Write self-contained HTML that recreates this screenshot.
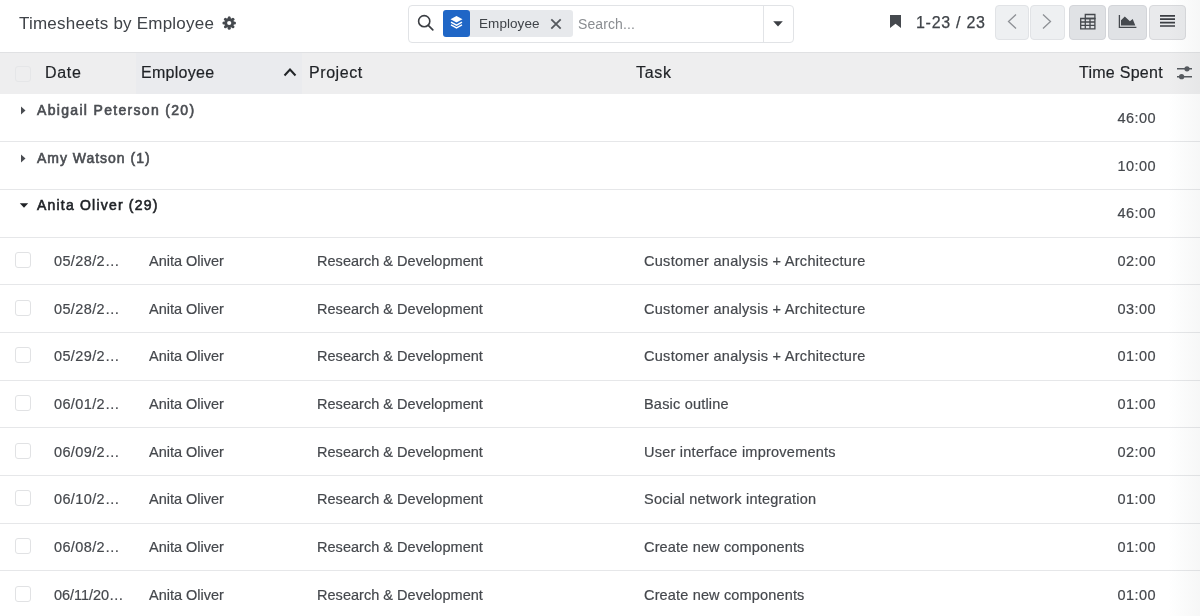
<!DOCTYPE html>
<html><head><meta charset="utf-8">
<style>
*{box-sizing:border-box;margin:0;padding:0}
html,body{width:1200px;height:616px;overflow:hidden;background:#fff;font-family:"Liberation Sans",sans-serif;color:#3d4147}
body{will-change:transform;position:relative}
.a{position:absolute;white-space:nowrap}
.title{left:19px;top:10px;font-size:17px;line-height:28px;letter-spacing:0.22px;color:#3f4348}
.search{left:408px;top:5px;width:386px;height:38px;border:1px solid #e1e3e6;border-radius:4px;background:#fff}
.badge{left:443px;top:10px;width:27px;height:27px;background:#1f66c6;border-radius:3px}
.facet{left:469px;top:10px;width:104px;height:27px;background:#e7e9ec;border-radius:0 3px 3px 0}
.btn{top:5px;height:35px;border:1px solid #e1e3e6;border-radius:4px;background:#eef0f2}
.hdr{left:0;top:52px;width:1200px;height:42px;background:#eeeeef;border-top:1px solid #e0e1e3}
.hsort{left:136px;top:53px;width:166px;height:41px;background:#eaebee}
.th{top:63px;font-size:16px;line-height:20px;color:#1f2226;-webkit-text-stroke:0.2px currentColor}
.cb{width:16px;height:16px;border:1px solid #e1e2e4;border-radius:3px;background:#fff}
.line{left:0;width:1200px;height:1px;background:#e6e7e9}
.grp{font-size:14px;line-height:20px;font-weight:400;-webkit-text-stroke:0.6px currentColor}
.td{font-size:14.5px;line-height:20px;color:#45484d;-webkit-text-stroke:0.2px currentColor}
.num{font-size:14.5px;line-height:20px;color:#45484d;letter-spacing:0.45px;text-align:right;-webkit-text-stroke:0.2px currentColor}
</style></head><body>

<div class="a title">Timesheets by Employee</div>
<svg class="a" style="left:222px;top:16px" width="15" height="14" viewBox="0 0 15 14"><g fill="#45494e"><circle cx="7.2" cy="7" r="4.9"/><circle cx="7.20" cy="12.30" r="1.5"/><circle cx="3.45" cy="10.75" r="1.5"/><circle cx="1.90" cy="7.00" r="1.5"/><circle cx="3.45" cy="3.25" r="1.5"/><circle cx="7.20" cy="1.70" r="1.5"/><circle cx="10.95" cy="3.25" r="1.5"/><circle cx="12.50" cy="7.00" r="1.5"/><circle cx="10.95" cy="10.75" r="1.5"/></g><circle cx="7.2" cy="7" r="2.1" fill="#fff"/></svg>

<div class="a search"></div>
<svg class="a" style="left:417px;top:14px" width="17" height="17" viewBox="0 0 17 17"><circle cx="7.2" cy="7.2" r="5.6" fill="none" stroke="#3b3e43" stroke-width="1.6"/><path d="M11.3 11.3L15.8 15.8" stroke="#3b3e43" stroke-width="1.7" stroke-linecap="round"/></svg>
<div class="a facet"></div>
<div class="a badge"></div>
<svg class="a" style="left:449px;top:15px" width="15" height="15" viewBox="0 0 15 15"><path fill="#fff" d="M7.5 1L13.5 4.3 7.5 7.6 1.5 4.3z"/><path fill="none" stroke="#fff" stroke-width="1.4" d="M2 7.2L7.5 10.2 13 7.2M2 9.9L7.5 12.9 13 9.9"/></svg>
<div class="a" style="left:479px;top:15px;font-size:13.5px;line-height:18px;letter-spacing:0.07px;color:#3f4348">Employee</div>
<svg class="a" style="left:550px;top:18px" width="12" height="12" viewBox="0 0 12 12"><path d="M1.3 1.3L10.7 10.7M10.7 1.3L1.3 10.7" stroke="#55595e" stroke-width="1.8"/></svg>
<div class="a" style="left:578px;top:15px;font-size:14px;line-height:18px;letter-spacing:0.1px;color:#8a8d91">Search...</div>
<div class="a" style="left:763px;top:6px;width:1px;height:36px;background:#e2e4e7"></div>
<svg class="a" style="left:772px;top:21px" width="12" height="7" viewBox="0 0 12 7"><path d="M1.2 0.3h9.6L6 5.5z" fill="#3b3e43"/></svg>

<svg class="a" style="left:889px;top:14px" width="13" height="15" viewBox="0 0 13 15"><path fill="#45494e" d="M1 1h11v13l-5.5-4.2L1 14z"/></svg>
<div class="a" style="left:916px;top:13px;font-size:16px;line-height:20px;letter-spacing:0.72px;color:#3f4348;-webkit-text-stroke:0.25px currentColor">1-23 / 23</div>

<div class="a btn" style="left:995px;width:34px"></div>
<svg class="a" style="left:1006px;top:13px" width="12" height="17" viewBox="0 0 12 17"><path d="M10 1.5L2.5 8.5 10 15.5" fill="none" stroke="#8d9095" stroke-width="1.3"/></svg>
<div class="a btn" style="left:1030px;width:35px"></div>
<svg class="a" style="left:1041px;top:13px" width="12" height="17" viewBox="0 0 12 17"><path d="M2 1.5L9.5 8.5 2 15.5" fill="none" stroke="#8d9095" stroke-width="1.3"/></svg>

<div class="a btn" style="left:1069px;width:37px;background:#e0e2e5;border-color:#d3d5d9"></div>
<svg class="a" style="left:1079px;top:13px" width="18" height="17" viewBox="0 0 18 17"><g fill="none" stroke="#45494e" stroke-width="1.3"><path d="M1.7 5.5h14.2v10.3H1.7z"/><path d="M6.3 1.5h9.6v4H6.3z"/><path d="M1.7 9h14.2M1.7 12.3h14.2M6.3 5.5v10.3M11 5.5v10.3"/></g></svg>
<div class="a btn" style="left:1108px;width:39px;background:#e0e2e5;border-color:#d3d5d9"></div>
<svg class="a" style="left:1118px;top:13px" width="20" height="17" viewBox="0 0 20 17"><path d="M1.4 1.9V14.4H18.4" fill="none" stroke="#45494e" stroke-width="1.3"/><path fill="#45494e" d="M3 12.5V7.3L6.8 3.4 11.9 8.2 14.7 5.9 17.3 12.5z"/></svg>
<div class="a btn" style="left:1149px;width:37px;background:#e9eaec;border-color:#d8d9dc"></div>
<svg class="a" style="left:1159px;top:14px" width="17" height="15" viewBox="0 0 17 15"><path d="M1 1.8h15M1 5.2h15M1 8.6h15M1 12h15" stroke="#3b3e43" stroke-width="1.7"/></svg>

<div class="a hdr"></div>
<div class="a hsort"></div>
<div class="a cb" style="left:15px;top:66px;background:transparent;border-color:#e5e6e8"></div>
<div class="a th" style="left:45px;letter-spacing:0.7px">Date</div>
<div class="a th" style="left:141px;letter-spacing:0.29px">Employee</div>
<svg class="a" style="left:283px;top:67px" width="14" height="10" viewBox="0 0 14 10"><path d="M1.5 8.5L7 2.5 12.5 8.5" fill="none" stroke="#222528" stroke-width="2"/></svg>
<div class="a th" style="left:309px;letter-spacing:0.57px">Project</div>
<div class="a th" style="left:636px;letter-spacing:0.7px">Task</div>
<div class="a th" style="left:1079px;letter-spacing:0.27px">Time Spent</div>
<svg class="a" style="left:1176px;top:64px" width="17" height="17" viewBox="0 0 17 17"><g stroke="#55595e" stroke-width="1.5"><path d="M1 4.8h15M1 12.7h15"/></g><circle cx="11" cy="4.8" r="2.6" fill="#55595e"/><circle cx="5.6" cy="12.7" r="2.6" fill="#55595e"/></svg>
<svg class="a" style="left:20px;top:106px" width="6" height="9" viewBox="0 0 6 9"><path d="M1 0.5v8l4.5-4z" fill="#4a4d52"/></svg>
<div class="a grp" style="left:37px;top:100px;color:#4a4d52;letter-spacing:1.32px">Abigail Peterson (20)</div>
<div class="a num" style="right:44px;top:108px">46:00</div>
<div class="a line" style="top:141px"></div>
<svg class="a" style="left:20px;top:154px" width="6" height="9" viewBox="0 0 6 9"><path d="M1 0.5v8l4.5-4z" fill="#4a4d52"/></svg>
<div class="a grp" style="left:37px;top:148px;color:#4a4d52;letter-spacing:0.98px">Amy Watson (1)</div>
<div class="a num" style="right:44px;top:156px">10:00</div>
<div class="a line" style="top:189px"></div>
<svg class="a" style="left:19px;top:203px" width="10" height="6" viewBox="0 0 10 6"><path d="M0.8 0.3h8.4L5 4.8z" fill="#1f2226"/></svg>
<div class="a grp" style="left:37px;top:195px;color:#1f2226;letter-spacing:1.2px">Anita Oliver (29)</div>
<div class="a num" style="right:44px;top:203px">46:00</div>
<div class="a line" style="top:237px"></div>
<div class="a cb" style="left:15px;top:252px"></div>
<div class="a td" style="left:54px;top:251px;letter-spacing:0.37px">05/28/2…</div>
<div class="a td" style="left:149px;top:251px">Anita Oliver</div>
<div class="a td" style="left:317px;top:251px;letter-spacing:0.03px">Research &amp; Development</div>
<div class="a td" style="left:644px;top:251px;letter-spacing:0.29px">Customer analysis + Architecture</div>
<div class="a num" style="right:44px;top:251px">02:00</div>
<div class="a line" style="top:284px"></div>
<div class="a cb" style="left:15px;top:300px"></div>
<div class="a td" style="left:54px;top:299px;letter-spacing:0.37px">05/28/2…</div>
<div class="a td" style="left:149px;top:299px">Anita Oliver</div>
<div class="a td" style="left:317px;top:299px;letter-spacing:0.03px">Research &amp; Development</div>
<div class="a td" style="left:644px;top:299px;letter-spacing:0.29px">Customer analysis + Architecture</div>
<div class="a num" style="right:44px;top:299px">03:00</div>
<div class="a line" style="top:332px"></div>
<div class="a cb" style="left:15px;top:347px"></div>
<div class="a td" style="left:54px;top:346px;letter-spacing:0.37px">05/29/2…</div>
<div class="a td" style="left:149px;top:346px">Anita Oliver</div>
<div class="a td" style="left:317px;top:346px;letter-spacing:0.03px">Research &amp; Development</div>
<div class="a td" style="left:644px;top:346px;letter-spacing:0.29px">Customer analysis + Architecture</div>
<div class="a num" style="right:44px;top:346px">01:00</div>
<div class="a line" style="top:380px"></div>
<div class="a cb" style="left:15px;top:395px"></div>
<div class="a td" style="left:54px;top:394px;letter-spacing:0.37px">06/01/2…</div>
<div class="a td" style="left:149px;top:394px">Anita Oliver</div>
<div class="a td" style="left:317px;top:394px;letter-spacing:0.03px">Research &amp; Development</div>
<div class="a td" style="left:644px;top:394px;letter-spacing:0.2px">Basic outline</div>
<div class="a num" style="right:44px;top:394px">01:00</div>
<div class="a line" style="top:427px"></div>
<div class="a cb" style="left:15px;top:443px"></div>
<div class="a td" style="left:54px;top:442px;letter-spacing:0.37px">06/09/2…</div>
<div class="a td" style="left:149px;top:442px">Anita Oliver</div>
<div class="a td" style="left:317px;top:442px;letter-spacing:0.03px">Research &amp; Development</div>
<div class="a td" style="left:644px;top:442px;letter-spacing:0.24px">User interface improvements</div>
<div class="a num" style="right:44px;top:442px">02:00</div>
<div class="a line" style="top:475px"></div>
<div class="a cb" style="left:15px;top:490px"></div>
<div class="a td" style="left:54px;top:489px;letter-spacing:0.37px">06/10/2…</div>
<div class="a td" style="left:149px;top:489px">Anita Oliver</div>
<div class="a td" style="left:317px;top:489px;letter-spacing:0.03px">Research &amp; Development</div>
<div class="a td" style="left:644px;top:489px;letter-spacing:0.24px">Social network integration</div>
<div class="a num" style="right:44px;top:489px">01:00</div>
<div class="a line" style="top:523px"></div>
<div class="a cb" style="left:15px;top:538px"></div>
<div class="a td" style="left:54px;top:537px;letter-spacing:0.37px">06/08/2…</div>
<div class="a td" style="left:149px;top:537px">Anita Oliver</div>
<div class="a td" style="left:317px;top:537px;letter-spacing:0.03px">Research &amp; Development</div>
<div class="a td" style="left:644px;top:537px;letter-spacing:0.16px">Create new components</div>
<div class="a num" style="right:44px;top:537px">01:00</div>
<div class="a line" style="top:570px"></div>
<div class="a cb" style="left:15px;top:586px"></div>
<div class="a td" style="left:54px;top:585px;letter-spacing:-0.05px">06/11/20…</div>
<div class="a td" style="left:149px;top:585px">Anita Oliver</div>
<div class="a td" style="left:317px;top:585px;letter-spacing:0.03px">Research &amp; Development</div>
<div class="a td" style="left:644px;top:585px;letter-spacing:0.16px">Create new components</div>
<div class="a num" style="right:44px;top:585px">01:00</div>
<div class="a" style="left:1168px;top:0;width:32px;height:616px;background:linear-gradient(to right,rgba(90,100,100,0),rgba(90,100,100,0.05))"></div>
</body></html>
